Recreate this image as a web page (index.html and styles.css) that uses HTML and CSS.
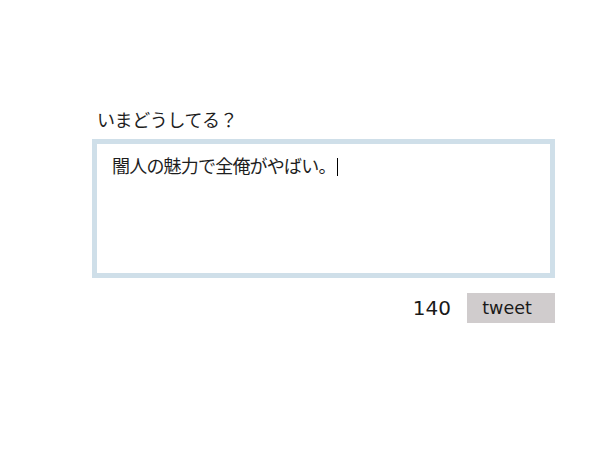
FILE: index.html
```html
<!DOCTYPE html>
<html lang="ja">
<head>
    <meta charset="UTF-8">
    <title>tweet</title>
    <link rel="stylesheet" href="styles.css">
</head>
<body>
    <div class="composer">
        <div class="prompt">いまどうしてる？</div>
        <div class="tweet-box">
            <span class="tweet-text">闇人の魅力で全俺がやばい。</span><span class="caret"></span>
        </div>
        <div class="actions">
            <span class="counter">140</span>
            <button class="button">tweet</button>
        </div>
    </div>
</body>
</html>
```

FILE: styles.css
```css
/* Base */
:root {
    --text-color: #1e1e1e;
    --border-color: #cfdfe9;
    --button-color: #d0cccd;
}

* {
    margin: 0;
    padding: 0;
    box-sizing: border-box;
}

body {
    width: 600px;
    height: 450px;
    background-color: #ffffff;
    color: var(--text-color);
    font-family: "DejaVu Sans", "Noto Sans CJK JP", sans-serif;
}

/* Composer */
.composer {
    width: 463px;
    margin-left: 92px;
    padding-top: 107px;
}

.prompt {
    padding-left: 5px;
    font-size: 18px;
    letter-spacing: -0.4px;
    line-height: 27px;
    margin-bottom: 5px;
}

.tweet-box {
    height: 139px;
    padding: 9px 15px;
    border: 5px solid var(--border-color);
    font-size: 18px;
    letter-spacing: -0.8px;
    line-height: 27px;
}

.caret {
    display: inline-block;
    width: 1px;
    height: 18px;
    margin-left: 1px;
    vertical-align: -3px;
    background-color: #000000;
}

/* Footer row */
.actions {
    display: flex;
    justify-content: flex-end;
    align-items: center;
    gap: 16px;
    margin-top: 15px;
}

.counter {
    font-size: 20px;
    color: #1a1a1a;
}

.button {
    width: 88px;
    height: 30px;
    padding-right: 8px;
    border: none;
    background-color: var(--button-color);
    color: #1a1a1a;
    font-family: "DejaVu Sans", sans-serif;
    font-size: 17.5px;
}
```
